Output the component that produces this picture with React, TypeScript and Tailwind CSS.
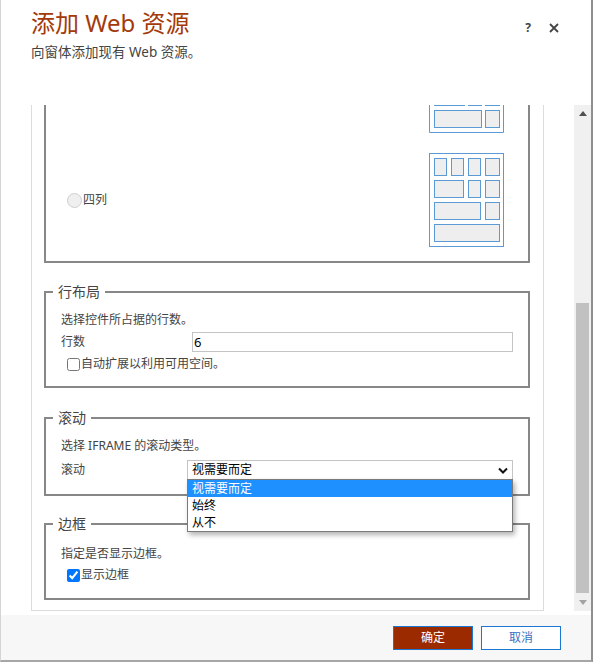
import React from "react";

const font = { fontFamily: '"Noto Sans", "Noto Sans CJK SC", sans-serif' };

const ink = "#5b9bd5";
const cellFill = "#eeeeee";

function Cell({ x, y, w, h }: { x: number; y: number; w: number; h: number }) {
  return <rect x={x + 0.5} y={y + 0.5} width={w} height={h} fill={cellFill} stroke={ink} strokeWidth={1} />;
}

// bottom part of the "three columns" preview, the rest is scrolled away
function PartialPreview() {
  return (
    <svg width="75" height="28" viewBox="0 0 75 28" className="block">
      <path d="M0.5 0 V27.5 H74.5 V0" fill="white" stroke={ink} />
      <Cell x={5} y={-20} w={30} h={20} />
      <Cell x={39} y={-20} w={13} h={20} />
      <Cell x={56} y={-20} w={14} h={20} />
      <Cell x={5} y={5} w={47} h={17} />
      <Cell x={56} y={5} w={14} h={17} />
    </svg>
  );
}

// "four columns" preview
function FourColPreview() {
  return (
    <svg width="75" height="94" viewBox="0 0 75 94" className="block">
      <rect x="0.5" y="0.5" width="74" height="93" fill="white" stroke={ink} />
      <Cell x={5} y={5} w={12} h={17} />
      <Cell x={22} y={5} w={12} h={17} />
      <Cell x={39} y={5} w={12} h={17} />
      <Cell x={56} y={5} w={14} h={17} />
      <Cell x={5} y={27} w={29} h={17} />
      <Cell x={39} y={27} w={12} h={17} />
      <Cell x={56} y={27} w={14} h={17} />
      <Cell x={5} y={49} w={46} h={17} />
      <Cell x={56} y={49} w={14} h={17} />
      <Cell x={5} y={71} w={65} h={17} />
    </svg>
  );
}

function Group({ title, className, children }: { title: string; className?: string; children: React.ReactNode }) {
  return (
    <fieldset className={`border-2 border-[#878787] p-0 m-0 ${className ?? ""}`}>
      <legend className="ml-[7px] px-[5px] text-[14px] leading-[18px] text-[#444]">{title}</legend>
      {children}
    </fieldset>
  );
}

function Checkbox({ checked, label }: { checked: boolean; label: string }) {
  return (
    <label className="flex items-center h-[18px] ml-[6px] text-[12px] text-[#444]">
      <input type="checkbox" defaultChecked={checked} className="m-0 w-[13px] h-[13px]" />
      <span className="ml-[1px]">{label}</span>
    </label>
  );
}

function ScrollSelect() {
  const options = ["视需要而定", "始终", "从不"];
  return (
    <div className="relative w-[326px] h-[20px]">
      <div className="h-full border border-[#c4c4c4] bg-white flex items-center justify-between pl-[4px] pr-[4px] text-[12px] text-black">
        <span>视需要而定</span>
        <svg width="10" height="7" viewBox="0 0 10 7">
          <path d="M1 1.5 L5 5.5 L9 1.5" fill="none" stroke="#111" strokeWidth="2" />
        </svg>
      </div>
      <ul className="absolute left-0 top-[19px] z-10 w-full border border-[#7a7a7a] bg-white shadow-[2px_3px_5px_rgba(0,0,0,0.3)]">
        {options.map((o, i) => (
          <li
            key={o}
            className={`h-[17px] leading-[17px] pl-[4px] text-[12px] ${i === 0 ? "bg-[#1e90ff] text-white" : "text-black"}`}
          >
            {o}
          </li>
        ))}
      </ul>
    </div>
  );
}

export default function App() {
  return (
    <div
      style={font}
      className="w-[593px] h-[662px] bg-white border-l border-l-[#d4d4d4] border-r-2 border-r-[#8f8f8f] border-b-2 border-b-[#a6a6a6] flex flex-col overflow-hidden"
    >
      {/* header */}
      <div className="h-[105px] flex justify-between shrink-0">
        <div className="pl-[30px] pt-[8px]">
          <h1 className="text-[24px] leading-[30px] text-[#a33a0b]">添加 Web 资源</h1>
          <p className="mt-[5px] text-[13.5px] leading-[18px] text-[#444]">向窗体添加现有 Web 资源。</p>
        </div>
        <div className="flex items-start gap-[17px] pr-[32px] pt-[22px]">
          <span className="w-[8px] text-center text-[12px] leading-[12px] font-bold text-[#444]">?</span>
          <svg width="10" height="10" viewBox="0 0 10 10" className="mt-[1px]">
            <path d="M1 1 L9 9 M9 1 L1 9" stroke="#444" strokeWidth="1.8" />
          </svg>
        </div>
      </div>

      {/* body */}
      <div className="h-[506px] flex shrink-0">
        <div className="ml-[30px] w-[513px] border-x border-b border-[#dcdcdc] pl-[12px] pr-[13px] pb-[10px] overflow-hidden">
          {/* column layout group, scrolled past its top */}
          <div className="border-2 border-t-0 border-[#878787] pb-[14px]">
            <div className="h-[28px] flex justify-end pr-[24px]">
              <PartialPreview />
            </div>
            <div className="mt-[20px] h-[94px] flex items-center justify-between pl-[21px] pr-[24px]">
              <label className="flex items-center text-[12px] text-[#444]">
                <span className="w-[15px] h-[15px] rounded-full border border-[#cfcfcf] bg-[#efefef]" />
                <span className="ml-[1px]">四列</span>
              </label>
              <FourColPreview />
            </div>
          </div>

          <Group title="行布局" className="mt-[20px]">
            <div className="px-[15px] pt-[10px] pb-[13px] text-[12px] text-[#444]">
              <p className="leading-[18px]">选择控件所占据的行数。</p>
              <div className="mt-[3px] flex items-center justify-between h-[20px]">
                <span>行数</span>
                <div className="w-[321px] h-[20px] border border-[#c4c4c4] pl-[1px] text-[13px] leading-[18px] text-black">6</div>
              </div>
              <div className="mt-[3px]">
                <Checkbox checked={false} label="自动扩展以利用可用空间。" />
              </div>
            </div>
          </Group>

          <Group title="滚动" className="mt-[21px]">
            <div className="px-[15px] pt-[10px] pb-[14px] text-[12px] text-[#444]">
              <p className="leading-[18px]">选择 IFRAME 的滚动类型。</p>
              <div className="mt-[5px] flex items-center justify-between h-[20px]">
                <span>滚动</span>
                <ScrollSelect />
              </div>
            </div>
          </Group>

          <Group title="边框" className="mt-[19px]">
            <div className="px-[15px] pt-[12px] pb-[14px] text-[12px] text-[#444]">
              <p className="leading-[18px]">指定是否显示边框。</p>
              <div className="mt-[3px]">
                <Checkbox checked={true} label="显示边框" />
              </div>
            </div>
          </Group>
        </div>

        {/* scrollbar */}
        <div className="ml-[30px] w-[17px] bg-[#f0f0f0] flex flex-col">
          <div className="h-[17px] flex items-center justify-center">
            <svg width="8" height="5" viewBox="0 0 8 5">
              <path d="M0 5 L4 0 L8 5 Z" fill="#505050" />
            </svg>
          </div>
          <div className="flex-1 flex flex-col justify-end items-center pb-[1px]">
            <div className="w-[13px] h-[290px] bg-[#c1c1c1]" />
          </div>
          <div className="h-[17px] flex items-center justify-center">
            <svg width="8" height="5" viewBox="0 0 8 5">
              <path d="M0 0 L8 0 L4 5 Z" fill="#a3a3a3" />
            </svg>
          </div>
        </div>
      </div>

      {/* footer */}
      <div className="mt-[4px] flex-1 bg-[#f7f7f7] flex justify-end gap-[8px] pr-[30px] pt-[11px]">
        <button className="w-[80px] h-[24px] bg-[#9c2a00] border border-[#1a78d4] text-white text-[12px]">确定</button>
        <button className="w-[80px] h-[24px] bg-white border border-[#1a78d4] text-[#3a6fc2] text-[12px]">取消</button>
      </div>
    </div>
  );
}
